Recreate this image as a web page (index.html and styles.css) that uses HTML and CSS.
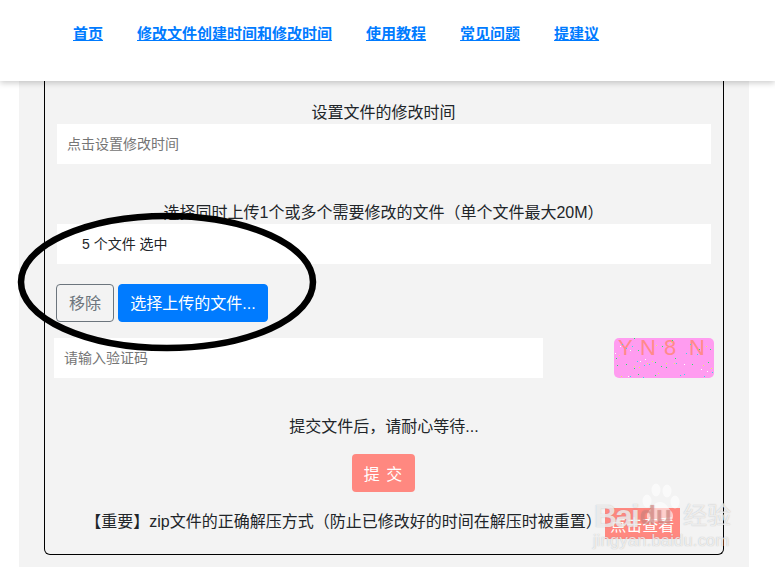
FILE: index.html
```html
<!DOCTYPE html>
<html>
<head>
    <title>修改文件创建时间和修改时间</title>
    <link rel="stylesheet" href="styles.css">
</head>
<body>
    <div class="header">
        <a href="#">首页</a>
        <a href="#">修改文件创建时间和修改时间</a>
        <a href="#">使用教程</a>
        <a href="#">常见问题</a>
        <a href="#">提建议</a>
    </div>

    <div class="panel">
        <div class="card">
            <div class="label">设置文件的修改时间</div>
            <div class="input-row">
                <div class="input-box placeholder">点击设置修改时间</div>
            </div>

            <div class="label label-second">选择同时上传1个或多个需要修改的文件（单个文件最大20M）</div>
            <div class="input-row">
                <div class="input-box file-count">5 个文件 选中</div>
            </div>

            <div class="file-buttons">
                <button class="remove-button">移除</button>
                <button class="choose-button">选择上传的文件...</button>
            </div>

            <div class="captcha-row">
                <div class="input-box placeholder captcha-input">请输入验证码</div>
                <svg class="captcha" width="100" height="40" viewBox="0 0 100 40">
                    <text x="4" y="17" class="captcha-text">Y</text>
                    <text x="26" y="17" class="captcha-text">N</text>
                    <text x="50" y="17" class="captcha-text">8</text>
                    <text x="75" y="17" class="captcha-text">N</text>
                    <path fill="#22e86a" d="M20 0h1v1h-1zM2 20h1v1h-1zM24 12h1v1h-1zM48 8h1v1h-1zM58 2h1v1h-1zM3 27h1v1h-1zM12 26h1v1h-1zM20 30h1v1h-1zM24 36h1v1h-1zM41 24h1v1h-1zM47 28h1v1h-1zM52 29h1v1h-1zM61 20h1v1h-1zM78 26h1v1h-1zM85 11h1v1h-1zM96 11h1v1h-1zM94 24h1v1h-1zM41 37h1v1h-1z"/>
                    <path fill="#37d8e8" d="M12 10h1v1h-1zM8 6h1v1h-1zM18 8h1v1h-1zM72 15h1v1h-1zM76 6h1v1h-1zM83 16h1v1h-1zM23 23h1v1h-1zM30 27h1v1h-1zM35 26h1v1h-1zM62 25h1v1h-1zM70 36h1v1h-1zM66 37h1v1h-1zM90 38h1v1h-1zM98 34h1v1h-1zM16 38h1v1h-1zM29 39h1v1h-1z"/>
                    <path fill="#e8f060" d="M5 17h1v1h-1zM42 7h1v1h-1zM55 6h1v1h-1zM57 4h1v1h-1zM92 8h1v1h-1zM20 28h1v1h-1zM25 29h1v1h-1zM38 23h1v1h-1zM44 35h1v1h-1zM52 25h1v1h-1zM60 25h1v1h-1zM89 27h1v1h-1zM97 30h1v1h-1zM7 38h1v1h-1zM33 25h1v1h-1z"/>
                    <path fill="#ffffff" d="M6 8h1v1h-1zM1 15h1v1h-1zM31 21h1v1h-1zM26 23h1v1h-1zM70 26h1v1h-1zM87 31h1v1h-1zM93 33h1v1h-1zM16 12h1v1h-1zM14 38h1v1h-1z"/>
                </svg>
            </div>

            <div class="wait-text">提交文件后，请耐心等待...</div>
            <div class="submit-row">
                <button class="submit-button">提 交</button>
            </div>

            <div class="notice-row">
                <span class="notice-text">【重要】zip文件的正确解压方式（防止已修改好的时间在解压时被重置）</span>
                <button class="view-button">点击查看</button>
            </div>
        </div>
    </div>

    <!-- hand drawn circle on top of the screenshot -->
    <svg class="circle-mark" width="310" height="148" viewBox="0 0 310 148">
        <ellipse cx="153" cy="74" rx="146" ry="66" fill="none" stroke="#000" stroke-width="6.5"/>
    </svg>

    <div class="watermark">
        <svg class="paw" width="44" height="44" viewBox="0 0 44 44">
            <ellipse cx="9" cy="19" rx="4.5" ry="6.5"/>
            <ellipse cx="18" cy="8" rx="4.5" ry="6.5"/>
            <ellipse cx="29" cy="9" rx="4.5" ry="6.5"/>
            <ellipse cx="37" cy="20" rx="4.5" ry="6.5"/>
            <path d="M22 20c-6 0-8 6-11 9-4 4-2 11 4 11 3 0 5-1 7-1s4 1 7 1c6 0 8-7 4-11-3-3-5-9-11-9z"/>
        </svg>
        <span class="wm-bai">Bai</span>
        <span class="wm-du">du</span>
        <span class="wm-jy">经验</span>
        <span class="wm-url">jingyan.baidu.com</span>
    </div>
</body>
</html>
```

FILE: styles.css
```css
* {
    box-sizing: border-box;
}

html, body {
    height: 567px;
    overflow: hidden;
}

body {
    margin: 0;
    background: #fff;
    color: #212529;
    font-family: "Liberation Sans", "Noto Sans CJK SC", sans-serif;
    font-size: 16px;
    position: relative;
}

button {
    font-family: inherit;
    font-size: 16px;
    border-radius: 4px;
    cursor: pointer;
}

.header {
    height: 81px;
    padding: 22px 0 0 73px;
    display: flex;
    gap: 34px;
    background: #fff;
    box-shadow: 0 2px 6px rgba(0, 0, 0, 0.2);
    position: relative;
}

.header a {
    color: #007bff;
    font-size: 15px;
    font-weight: bold;
    line-height: 23px;
    height: 23px;
}

.panel {
    width: 730px;
    margin-left: 19px;
    padding: 0 25px 12px;
    background: #f3f3f3;
}

.card {
    height: 474px;
    padding-top: 20px;
    border: 1px solid #000;
    border-top: none;
    border-radius: 0 0 6px 6px;
}

.label {
    text-align: center;
    line-height: 23px;
    height: 23px;
    padding-right: 1px;
}

.label-second {
    margin-top: 37px;
}

.input-row {
    padding: 0 12px;
}

.input-box {
    height: 40px;
    background: #fff;
    font-size: 14px;
    line-height: 40px;
}

.placeholder {
    padding-left: 10px;
    color: #757575;
}

.file-count {
    padding-left: 25px;
}

.file-buttons {
    margin-top: 20px;
    padding-left: 11px;
    display: flex;
    gap: 4px;
}

.remove-button {
    width: 58px;
    height: 38px;
    padding: 0 0 2px;
    background: transparent;
    border: 1px solid #6c757d;
    color: #6c757d;
}

.choose-button {
    width: 150px;
    height: 38px;
    padding: 0 0 2px;
    background: #007bff;
    border: 1px solid #007bff;
    color: #fff;
}

.captcha-row {
    margin-top: 16px;
    padding: 0 9px;
    display: flex;
    justify-content: space-between;
}

.captcha-input {
    width: 489px;
}

.captcha {
    background: #ff9cf0;
    border-radius: 5px;
}

.captcha-text {
    fill: #ff8a8a;
    font-size: 22px;
    font-family: "Liberation Sans", sans-serif;
}

.wait-text {
    margin-top: 37px;
    text-align: center;
    line-height: 23px;
    height: 23px;
}

.submit-row {
    margin-top: 16px;
    padding-right: 1px;
    display: flex;
    justify-content: center;
}

.submit-button {
    width: 63px;
    height: 38px;
    padding: 0;
    background: #ff8880;
    border: none;
    color: #fff;
    letter-spacing: 1px;
}

.notice-row {
    margin-top: 16px;
    padding-right: 3px;
    display: flex;
    justify-content: center;
    align-items: flex-start;
    gap: 3px;
}

.notice-text {
    line-height: 28px;
}

.view-button {
    width: 75px;
    height: 31px;
    padding: 0;
    background: #ff8880;
    border: none;
    border-radius: 0;
    color: #fff;
    position: relative;
}

.circle-mark {
    position: absolute;
    left: 14px;
    top: 208px;
}

.watermark {
    position: absolute;
    left: 590px;
    top: 480px;
    width: 150px;
    height: 75px;
    color: rgba(255, 255, 255, 0.72);
}

.paw {
    position: absolute;
    left: 48px;
    top: 2px;
    fill: rgba(255, 255, 255, 0.6);
}

.watermark span {
    position: absolute;
    white-space: nowrap;
    text-shadow: 0 0 1px rgba(120, 120, 120, 0.5);
}

.wm-bai {
    left: 4px;
    top: 16px;
    font-size: 32px;
    line-height: 40px;
    font-weight: bold;
    letter-spacing: -2px;
}

.wm-du {
    left: 50px;
    top: 20px;
    font-size: 26px;
    line-height: 30px;
    font-weight: bold;
    color: rgba(255, 136, 128, 0.45);
    text-shadow: none;
}

.wm-jy {
    left: 93px;
    top: 21px;
    font-size: 24px;
    line-height: 30px;
}

.wm-url {
    left: 3px;
    top: 49px;
    font-size: 16.5px;
    line-height: 22px;
    letter-spacing: 0.2px;
}
```
